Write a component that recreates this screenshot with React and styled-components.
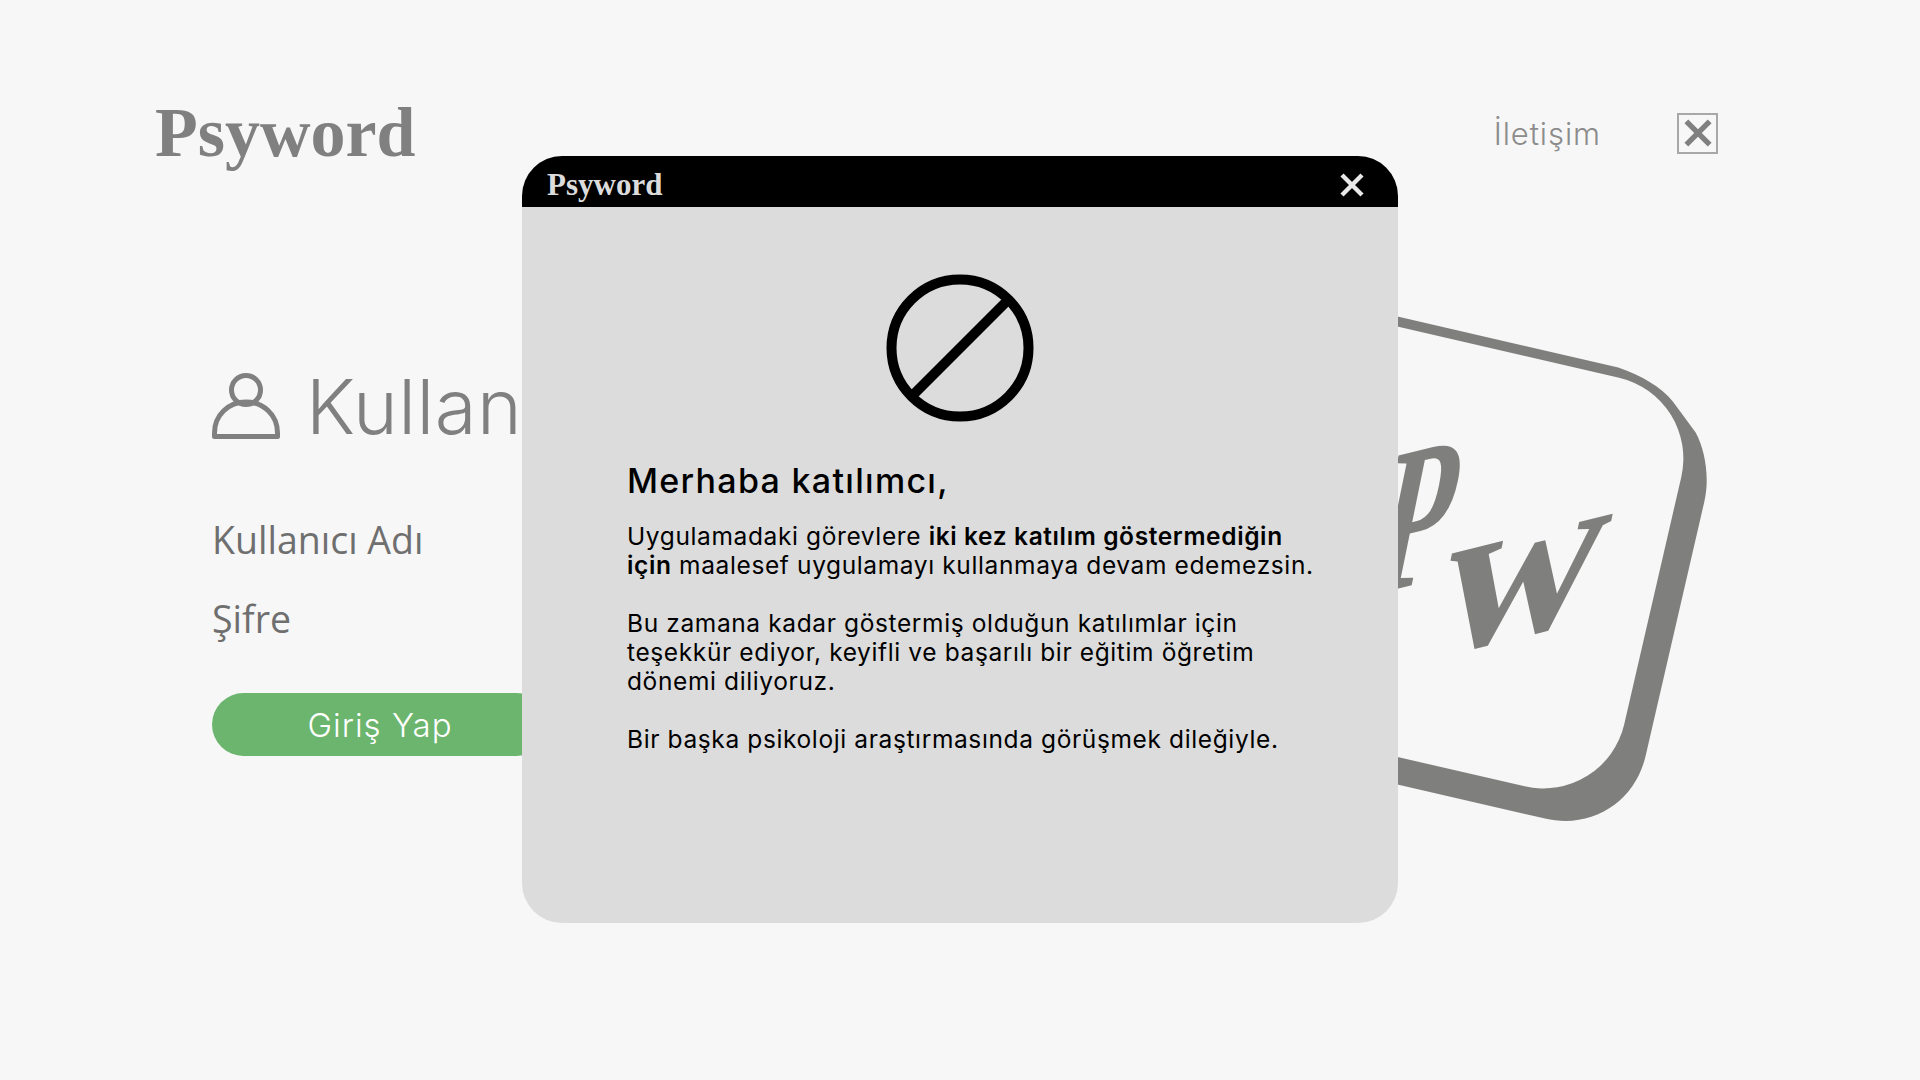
import React from "react";
import styled, { createGlobalStyle } from "styled-components";

const GlobalStyle = createGlobalStyle`
  html, body {
    margin: 0;
    padding: 0;
  }
  * {
    box-sizing: border-box;
  }
`;

const CloseIcon = ({ size, stroke, color }) => (
  <svg width={size} height={size} viewBox="0 0 24 24" fill="none">
    <path d="M2 2L22 22M22 2L2 22" stroke={color} strokeWidth={stroke} />
  </svg>
);

const UserIcon = () => (
  <IconBox width="68" height="66" viewBox="0 0 68 66" fill="none" stroke="#808080" strokeWidth="5">
    <circle cx="34" cy="17" r="14.5" />
    <path d="M2.5 63.5V60C2.5 42 16.5 29 34 29C51.5 29 65.5 42 65.5 60V63.5Z" strokeLinejoin="round" />
  </IconBox>
);

const BanIcon = () => (
  <svg width="148" height="148" viewBox="0 0 148 148" fill="none" stroke="#000" strokeWidth="10">
    <circle cx="74" cy="74" r="68.5" />
    <path d="M25 123L123 25" />
  </svg>
);

const CardArt = () => (
  <ArtSvg viewBox="1190 250 560 620">
    <g transform="rotate(13) translate(1317.5 -6)">
      <path
        d="M60 0H342C367 3 388 9 403 21L432 46C446 62 456 88 456 111V372C456 420 420 456 372 456H60Z"
        fill="#7f7f7d"
      />
      <rect x="-60" y="9.8" width="488" height="419.4" rx="83" fill="#f7f7f7" />
    </g>
    <ArtLetter transform="matrix(.55 -.135 -.2 .98 1368 596)" fontSize="218">P</ArtLetter>
    <ArtLetter transform="matrix(.97 -.24 -.2 .98 1430 658)" fontSize="232">w</ArtLetter>
  </ArtSvg>
);

const App = () => {
  return (
    <Page>
      <GlobalStyle />
      <Header>
        <Logo>Psyword</Logo>
        <Nav>
          <NavLink>İletişim</NavLink>
          <BoxButton>
            <CloseIcon size={28} stroke={4.6} color="#808080" />
          </BoxButton>
        </Nav>
      </Header>
      <Main>
        <LoginColumn>
          <TitleRow>
            <UserIcon />
            <Title>Kullanıcı Girişi</Title>
          </TitleRow>
          <FieldLabel>Kullanıcı Adı</FieldLabel>
          <FieldLabel>Şifre</FieldLabel>
          <LoginButton>Giriş Yap</LoginButton>
        </LoginColumn>
        <CardArt />
      </Main>
      <Modal>
        <ModalHeader>
          <ModalLogo>Psyword</ModalLogo>
          <CloseIcon size={24} stroke={4.4} color="#e8e8e8" />
        </ModalHeader>
        <ModalBody>
          <IconWrap>
            <BanIcon />
          </IconWrap>
          <Heading>Merhaba katılımcı,</Heading>
          <Paragraph>
            Uygulamadaki görevlere <b>iki kez katılım göstermediğin</b>
            <br />
            <b>için</b> maalesef uygulamayı kullanmaya devam edemezsin.
          </Paragraph>
          <Paragraph>
            Bu zamana kadar göstermiş olduğun katılımlar için
            <br />
            teşekkür ediyor, keyifli ve başarılı bir eğitim öğretim
            <br />
            dönemi diliyoruz.
          </Paragraph>
          <Paragraph>Bir başka psikoloji araştırmasında görüşmek dileğiyle.</Paragraph>
        </ModalBody>
      </Modal>
    </Page>
  );
};

const Page = styled.div`
  position: relative;
  display: flex;
  flex-direction: column;
  width: 1920px;
  height: 1080px;
  padding: 100px 202px 0 155px;
  overflow: hidden;
  background: #f7f7f7;
  font-family: "Inter", "Open Sans", sans-serif;
`;

const Header = styled.header`
  display: flex;
  justify-content: space-between;
  align-items: center;
  height: 66px;
`;

const Logo = styled.div`
  font-family: "Liberation Serif", serif;
  font-size: 70px;
  font-weight: 700;
  line-height: 66px;
  color: #808080;
`;

const Nav = styled.nav`
  display: flex;
  align-items: center;
  gap: 76px;
`;

const NavLink = styled.span`
  font-size: 31px;
  font-weight: 300;
  letter-spacing: 0.9px;
  color: #8c8c8c;
`;

const BoxButton = styled.div`
  display: flex;
  justify-content: center;
  align-items: center;
  width: 41px;
  height: 41px;
  border: 2px solid #a8a8a8;
`;

const Main = styled.main`
  display: flex;
  justify-content: space-between;
  align-items: flex-start;
  padding-left: 57px;
  margin-right: -32px;
`;

const LoginColumn = styled.section`
  display: flex;
  flex-direction: column;
  flex: none;
  width: 336px;
  margin-top: 207px;
`;

const TitleRow = styled.div`
  display: flex;
  align-items: center;
  gap: 26px;
  height: 66px;
  margin-bottom: 79px;
  white-space: nowrap;
`;

const IconBox = styled.svg`
  flex: none;
`;

const Title = styled.h1`
  margin: 0;
  font-size: 76px;
  font-weight: 300;
  letter-spacing: 0.5px;
  color: #808080;
`;

const FieldLabel = styled.div`
  height: 44px;
  margin-bottom: 35px;
  font-family: "Open Sans", sans-serif;
  font-size: 37.5px;
  line-height: 44px;
  color: #6f6f6f;
`;

const LoginButton = styled.div`
  display: flex;
  justify-content: center;
  align-items: center;
  height: 63px;
  margin-top: 17px;
  border-radius: 32px;
  background: #6cb56e;
  font-size: 33px;
  font-weight: 300;
  letter-spacing: 1px;
  color: #fff;
`;

const ArtSvg = styled.svg`
  flex: none;
  width: 560px;
  height: 620px;
  margin-top: 84px;
`;

const ArtLetter = styled.text`
  font-family: "Liberation Serif", serif;
  font-weight: 700;
  fill: #7f7f7d;
`;

const Modal = styled.div`
  position: absolute;
  left: 522px;
  top: 156px;
  display: flex;
  flex-direction: column;
  width: 876px;
  height: 767px;
  border-radius: 40px;
  overflow: hidden;
  background: #dcdcdc;
`;

const ModalHeader = styled.div`
  display: flex;
  justify-content: space-between;
  align-items: center;
  flex: none;
  height: 51px;
  padding: 6px 34px 0 25px;
  background: #000;
`;

const ModalLogo = styled.div`
  font-family: "Liberation Serif", serif;
  font-size: 31px;
  font-weight: 700;
  color: #dcdcdc;
`;

const ModalBody = styled.div`
  display: flex;
  flex-direction: column;
  padding: 67px 60px 0 105px;
`;

const IconWrap = styled.div`
  display: flex;
  justify-content: center;
  margin-left: -45px;
`;

const Heading = styled.h2`
  margin: 37px 0 19px;
  font-size: 34px;
  font-weight: 500;
  line-height: 44px;
  letter-spacing: 1.3px;
  color: #000;
`;

const Paragraph = styled.p`
  margin: 0 0 29px;
  font-size: 24.5px;
  line-height: 29px;
  letter-spacing: 0.62px;
  color: #000;
  white-space: nowrap;
  b {
    font-weight: 600;
  }
`;

export default App;
